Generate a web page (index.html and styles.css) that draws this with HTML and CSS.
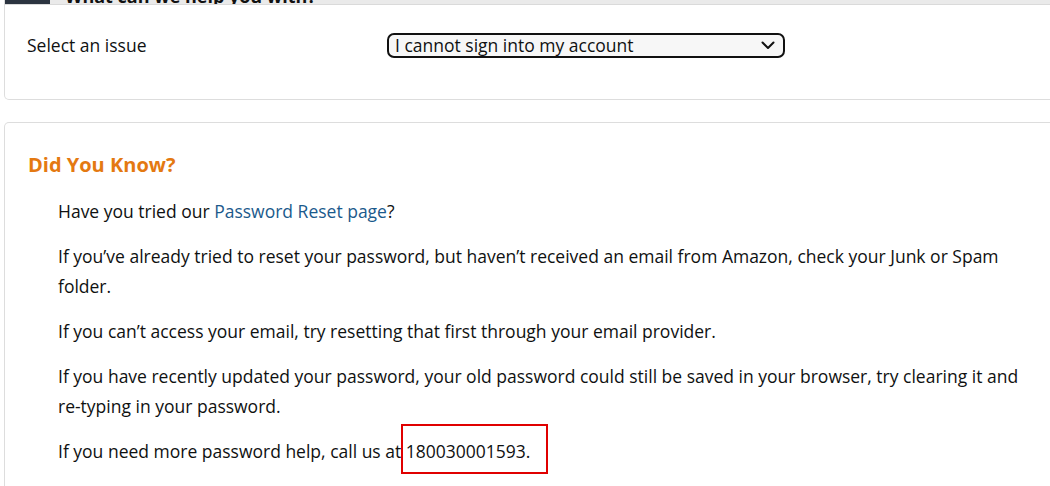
FILE: index.html
```html
<!DOCTYPE html>
<html>
<head>
<meta charset="utf-8">
<link rel="stylesheet" href="styles.css">
</head>
<body>
<div class="page">
  <section class="card card-issue">
    <div class="card-head">
      <span class="tab"></span>
      <h2 class="head-title">What can we help you with?</h2>
    </div>
    <div class="issue-row">
      <label class="issue-label">Select an issue</label>
      <div class="select">
        <span class="select-text">I cannot sign into my account</span>
        <svg class="chev" width="14" height="9" viewBox="0 0 14 9"><path d="M1.5 1.5 L7 7 L12.5 1.5" fill="none" stroke="#111" stroke-width="2" stroke-linecap="round" stroke-linejoin="round"/></svg>
      </div>
    </div>
  </section>

  <section class="card card-know">
    <h3 class="know-title">Did You Know?</h3>
    <div class="know-body">
      <p>Have you tried our <a class="link" href="#">Password Reset page</a>?</p>
      <p>If you’ve already tried to reset your password, but haven’t received an email from Amazon, check your Junk or Spam folder.</p>
      <p>If you can’t access your email, try resetting that first through your email provider.</p>
      <p>If you have recently updated your password, your old password could still be saved in your browser, try clearing it and <span class="nowrap">re-typing</span> in your password.</p>
      <p>If you need more password help, call us at <span class="phone">180030001593.</span></p>
    </div>
  </section>
</div>
</body>
</html>
```

FILE: styles.css
```css
html, body {
  margin: 0;
  padding: 0;
  background: #fff;
}
body {
  font-family: "Open Sans", "Noto Sans", Arial, sans-serif;
  color: #0f1111;
  font-size: 17.5px;
  overflow: hidden;
}
.page {
  padding-left: 4px;
  width: 1100px;
}
.card {
  border: 1px solid #dddddd;
  border-radius: 5px;
  background: #fff;
}
.card-issue {
  border-top: none;
  border-radius: 0 0 5px 5px;
  overflow: hidden;
}
.card-head {
  height: 4px;
  background: #eaeaea;
  border-bottom: 1px solid #dadada;
  display: flex;
  align-items: flex-end;
  overflow: hidden;
  margin-left: -5px;
}
.tab {
  width: 50px;
  height: 30px;
  background: #2b3440;
  flex: none;
}
.head-title {
  margin: 0 0 -2px 15px;
  font-size: 18px;
  font-weight: 700;
  line-height: 20px;
  color: #111;
  white-space: nowrap;
}
.issue-row {
  display: flex;
  align-items: center;
  height: 94px;
  box-sizing: border-box;
  padding: 0 0 14px 0;
}
.issue-label {
  box-sizing: border-box;
  width: 382px;
  padding-left: 22px;
  flex: none;
}
.select {
  box-sizing: border-box;
  width: 398px;
  height: 25px;
  border: 2px solid #111;
  border-radius: 7px;
  background: #f7f7f7;
  display: flex;
  align-items: center;
  justify-content: space-between;
  padding: 0 8px 0 6px;
}
.select-text {
  line-height: 20px;
}
.chev {
  display: block;
}
.card-know {
  margin-top: 22px;
  padding: 26px 0 0 23px;
  border-bottom: none;
  border-radius: 5px 5px 0 0;
  height: 400px;
}
.know-title {
  margin: 0;
  color: #e47911;
  font-size: 20px;
  font-weight: 700;
  line-height: 32px;
}
.know-body {
  padding-left: 30px;
  padding-top: 15px;
}
.know-body p {
  margin: 0 0 15px 0;
  line-height: 30px;
  max-width: 962px;
}
.nowrap {
  white-space: nowrap;
}
.link {
  color: #1b5a8c;
  text-decoration: none;
}
.phone {
  outline: 2px solid #e00000;
  padding: 13px 16px 9px 3px;
  margin-left: -3px;
}
```
